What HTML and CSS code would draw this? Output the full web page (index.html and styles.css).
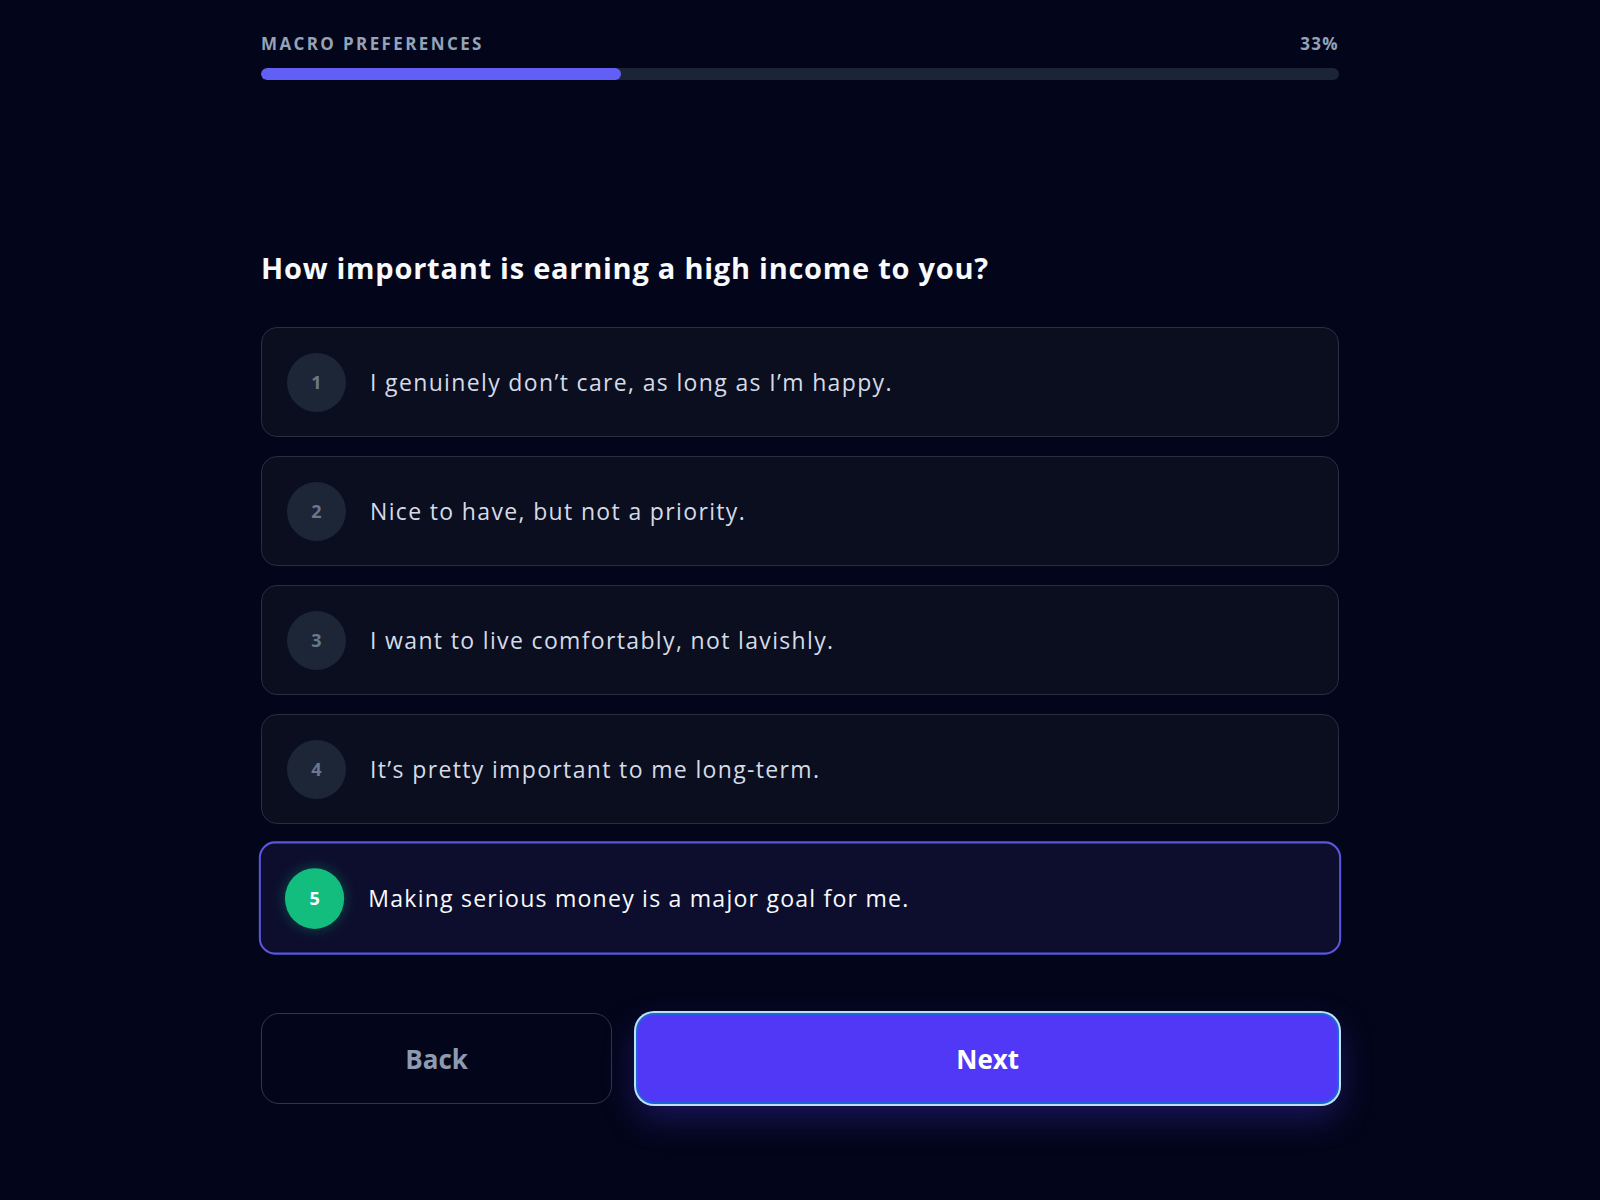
FILE: index.html
```html
<!DOCTYPE html>
<html lang="en">
<head>
    <meta charset="UTF-8">
    <meta name="viewport" content="width=device-width, initial-scale=1.0">
    <title>Macro Preferences</title>
    <link rel="stylesheet" href="styles.css">
</head>
<body>
    <div class="quiz">
        <div class="progress-head">
            <span class="step-label">MACRO PREFERENCES</span>
            <span class="step-label">33%</span>
        </div>
        <div class="progress-track">
            <div class="progress-fill" style="width: 33.4%"></div>
        </div>

        <h1 class="question">How important is earning a high income to you?</h1>

        <ul class="options">
            <li class="option">
                <span class="num">1</span>
                <span class="option-text">I genuinely don’t care, as long as I’m happy.</span>
            </li>
            <li class="option">
                <span class="num">2</span>
                <span class="option-text">Nice to have, but not a priority.</span>
            </li>
            <li class="option">
                <span class="num">3</span>
                <span class="option-text">I want to live comfortably, not lavishly.</span>
            </li>
            <li class="option">
                <span class="num">4</span>
                <span class="option-text">It’s pretty important to me long-term.</span>
            </li>
            <li class="option selected">
                <span class="num">5</span>
                <span class="option-text">Making serious money is a major goal for me.</span>
            </li>
        </ul>

        <div class="actions">
            <button class="btn btn-back">Back</button>
            <button class="btn btn-next">Next</button>
        </div>
    </div>
</body>
</html>
```

FILE: styles.css
```css
body, html {
    margin: 0;
    padding: 0;
    min-height: 100%;
    background-color: #03061a;
    font-family: "Open Sans", "Noto Sans", sans-serif;
    color: #cbd5e1;
}
.quiz {
    width: 1078px;
    margin: 0 auto;
    padding: 32px 0 80px;
}
.progress-head {
    display: flex;
    justify-content: space-between;
    line-height: 24px;
}
.step-label {
    font-size: 17px;
    font-weight: 700;
    letter-spacing: 0.14em;
    color: #94a3b8;
}
.step-label:last-child {
    letter-spacing: 0.08em;
}
.progress-track {
    margin-top: 12px;
    height: 12px;
    border-radius: 6px;
    background-color: #1c2537;
    overflow: hidden;
}
.progress-fill {
    height: 100%;
    border-radius: 6px;
    background-color: #625ff7;
}
.question {
    margin: 168px 0 0;
    font-size: 29px;
    line-height: 40px;
    font-weight: 700;
    letter-spacing: 0.75px;
    color: #f8fafc;
}
.options {
    list-style: none;
    margin: 39px 0 0;
    padding: 0;
    display: flex;
    flex-direction: column;
    gap: 19px;
}
.option {
    box-sizing: border-box;
    height: 110px;
    display: flex;
    align-items: center;
    gap: 24px;
    padding: 0 25px;
    border: 1px solid #272e40;
    border-radius: 16px;
    background-color: #0a0e1f;
}
.num {
    width: 59px;
    height: 59px;
    flex-shrink: 0;
    border-radius: 50%;
    background-color: #1d2637;
    color: #6a788e;
    font-size: 18px;
    font-weight: 700;
    display: flex;
    justify-content: center;
    align-items: center;
}
.option-text {
    font-size: 23px;
    font-weight: 500;
    letter-spacing: 1.35px;
    color: #d5dbe6;
}
/* picked answer */
.option.selected {
    border: 2px solid #5a56de;
    padding: 0 24px;
    background-color: #0d0e2d;
    transform: scale(1.004, 1.03);
}
.option.selected .num {
    background-color: #12bd7e;
    color: #fff;
    box-shadow: 0 0 14px rgba(18, 189, 126, 0.35);
}
.option.selected .option-text {
    color: #f8fafc;
    letter-spacing: 1.2px;
}
.actions {
    display: grid;
    grid-template-columns: 1fr 2fr;
    gap: 24px;
    margin-top: 60px;
}
.btn {
    height: 91px;
    border-radius: 18px;
    font-family: inherit;
    font-size: 26px;
    font-weight: 700;
    cursor: pointer;
}
.btn-back {
    background: transparent;
    border: 1px solid #2f3748;
    color: #8e9ab0;
}
.btn-next {
    background-color: #5038f6;
    border: 2px solid #1c66d8;
    color: #fff;
    box-shadow: 0 0 0 2px #bfe0f7, 0 14px 34px rgba(80, 56, 246, 0.3);
}
```
